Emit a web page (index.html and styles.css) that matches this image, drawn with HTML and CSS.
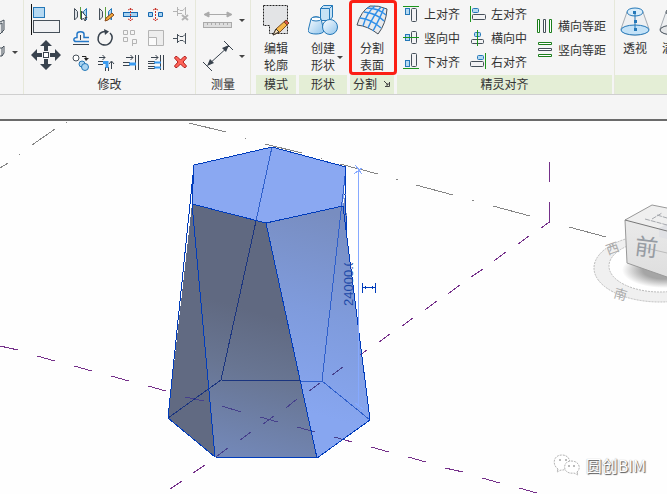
FILE: index.html
```html
<!DOCTYPE html>
<html lang="zh-CN">
<head>
<meta charset="utf-8">
<title>圆创BIM</title>
<link rel="stylesheet" href="styles.css">
</head>
<body>
<header class="ribbon">
  <section class="panel panel-prev">
    <div class="panel-body prev-body">
      <button class="tool" aria-label="几何图形"><svg width="6" height="16" viewBox="0 0 6 16"><path d="M0 3L4 1V11L0 15M0 5L2 4V14" fill="#e4e6e8" stroke="#46505a"/></svg></button>
      <button class="tool split" aria-label="连接"><svg width="6" height="14" viewBox="0 0 6 14"><path d="M0 3H2L4 1V8L2 11H0M2 3V11" fill="#f2f2f2" stroke="#46505a"/></svg><span class="caret"></span></button>
    </div>
  </section>

  <section class="panel">
    <div class="panel-body modify-body">
      <div class="big-tools">
        <button class="tool" aria-label="对齐"><svg width="32" height="34" viewBox="0 0 32 34"><path d="M1.500 2V33" stroke="#111" fill="none"/><rect x="3.500" y="5.500" width="11" height="10" fill="#b5d9f2" stroke="#2478b8"/><rect x="3.500" y="18.500" width="26" height="12" fill="#f0f1f3" stroke="#46505a"/></svg></button>
        <button class="tool" aria-label="移动"><svg width="32" height="34" viewBox="0 0 32 34"><g fill="#39434e"><path d="M16 2L22 8H18V13H14V8H10zM16 32L22 26H18V21H14V26H10zM1 17L7 11V15H12V19H7V23zM31 17L25 11V15H20V19H25V23z"/></g><rect x="13.500" y="14.500" width="5" height="5" fill="#fff" stroke="#39434e"/></svg></button>
      </div>
      <div class="tool-grid">
        <button class="tool" aria-label="镜像拾取轴"><svg width="25" height="24" viewBox="0 0 25 24"><path d="M6.500 6.500L9.500 9.500V15L6.500 18z" fill="#dfe3e8" stroke="#46505a"/><path d="M12.500 5V17" stroke="#5aa03c"/><path d="M18.500 6.500L15.500 9.500V15L18.500 18z" fill="#a9d3f0" stroke="#2478b8"/><path d="M13.500 9V18L15.500 16L17 19L18 18L17 15.500H19z" fill="#fff" stroke="#39434e"/></svg></button>
        <button class="tool" aria-label="镜像绘制轴"><svg width="25" height="24" viewBox="0 0 25 24"><path d="M6.500 6.500L9.500 9.500V15L6.500 18z" fill="#dfe3e8" stroke="#46505a"/><path d="M12.500 5V17" stroke="#5aa03c"/><path d="M18.500 6.500L15.500 9.500V15L18.500 18z" fill="#a9d3f0" stroke="#2478b8"/><path d="M12 19L13 16L19 11L21 13L15 18z" fill="#f2a93b" stroke="#8a4a1c"/></svg></button>
        <button class="tool" aria-label="拆分图元"><svg width="25" height="24" viewBox="0 0 25 24"><rect x="5.500" y="10.500" width="14" height="4" fill="#a9d3f0" stroke="#1668b0"/><path d="M12.500 6V19M10 8L12 7M15 8L13 7M10 17L12 18M15 17L13 18" stroke="#c8332b" stroke-dasharray="2 1"/></svg></button>
        <button class="tool" aria-label="用间隙拆分"><svg width="25" height="24" viewBox="0 0 25 24"><path d="M5.500 10.500H9.500V14.500H5.500zM15.500 10.500H19.500V14.500H15.500z" fill="#a9d3f0" stroke="#1668b0"/><path d="M12.500 6V19M10 8L12 7M15 8L13 7M10 17L12 18M15 17L13 18" stroke="#c8332b" stroke-dasharray="2 1"/></svg></button>
        <button class="tool" aria-label="解锁"><svg width="25" height="24" viewBox="0 0 25 24" fill="none" stroke="#b4b4b4"><path d="M5 9.500H9M9.500 5V14M9.500 7.500H11L12 8.500H15L16.500 6.500M9.500 11.500H14M17.500 5V13"/><path d="M14 13L20 18M20 13L14 18" stroke-width="2"/></svg></button>

        <button class="tool" aria-label="偏移"><svg width="25" height="24" viewBox="0 0 25 24" fill="none"><path d="M21 15.500H8C5 15.500 5 11.500 9 11.500V8C9 5 16 5 16 8V11.500H21" stroke="#2478c8" stroke-width="1.500"/><path d="M5 18.500H21M12.500 14V9" stroke="#39434e"/></svg></button>
        <button class="tool" aria-label="旋转"><svg width="25" height="24" viewBox="0 0 25 24"><path d="M12 5.500C4 6 3 16 9 18.500C17 21 22 12 17 7" fill="none" stroke="#39434e" stroke-width="1.500"/><path d="M11 3L16 5.500L12 9z" fill="#39434e"/></svg></button>
        <button class="tool" aria-label="阵列"><svg width="25" height="24" viewBox="0 0 25 24" fill="none" stroke="#b4b4b4"><path d="M5.500 4.500H9.500V8.500H5.500zM12.500 4.500H16.500V8.500H12.500zM5.500 11.500H9.500V15.500H5.500zM14.500 20V13.500H18.500V17.500H15"/></svg></button>
        <button class="tool" aria-label="缩放"><svg width="25" height="24" viewBox="0 0 25 24" fill="#ededed" stroke="#b4b4b4"><path d="M5.500 4.500H20.500V19.500H5.500z"/><path d="M5.500 11.500H13.500V19.500H5.500z" fill="#fafafa"/></svg></button>
        <button class="tool" aria-label="锁定"><svg width="25" height="24" viewBox="0 0 25 24" fill="none" stroke="#46505a"><path d="M5 12.500H9M9.500 8V17M17.500 7V18M9.500 9.500H11L12 10.500H15L17 8.500M9.500 15.500H11L12 14.500H15L17 16.500"/></svg></button>

        <button class="tool" aria-label="复制"><svg width="25" height="24" viewBox="0 0 25 24"><circle cx="8" cy="8" r="3" fill="#fff" stroke="#46505a"/><path d="M14 6.500H18V9" fill="none" stroke="#222"/><path d="M16 8H21L18 11z" fill="#222"/><circle cx="14" cy="14" r="3" fill="#a9d3f0" stroke="#2478b8"/><circle cx="17" cy="17" r="3.500" fill="#a9d3f0" stroke="#2478b8"/></svg></button>
        <button class="tool" aria-label="修剪延伸为角"><svg width="25" height="24" viewBox="0 0 25 24" fill="none"><path d="M6 7.500H12M9.500 5L12 7.500L9.500 10M18.500 19V12M16 14L18.500 11L21 14" stroke="#39434e"/><path d="M5 11.500H10M5 14.500H10M12.500 17V21M15.500 17V21" stroke="#39434e"/><path d="M10 12.500H14V18" stroke="#3a9bf0" stroke-width="3"/></svg></button>
        <button class="tool" aria-label="修剪延伸单个图元"><svg width="25" height="24" viewBox="0 0 25 24" fill="none"><path d="M8 7.500H15M12.500 5L15 7.500L12.500 10M17.500 5V20M20.500 5V20M5 12.500H12M5 15.500H12" stroke="#39434e"/><path d="M11 14H18" stroke="#3a9bf0" stroke-width="3"/></svg></button>
        <button class="tool" aria-label="修剪延伸多个图元"><svg width="25" height="24" viewBox="0 0 25 24" fill="none"><path d="M8 7.500H15M12.500 5L15 7.500L12.500 10M17.500 5V20M20.500 5V20M5 11.500H12M5 13.500H12M5 16.500H12M5 18.500H12" stroke="#39434e"/><path d="M11 12.500H18M11 17.500H18" stroke="#3a9bf0" stroke-width="2"/></svg></button>
        <button class="tool" aria-label="删除"><svg width="25" height="24" viewBox="0 0 25 24"><path d="M7.500 6.500H9L12.500 10L16 6.500H17.500L18.500 8L15 12L18.500 16L17.500 17.500H16L12.500 14L9 17.500H7.500L6.500 16L10 12L6.500 8z" fill="#ff6458" stroke="#b01f1f"/></svg></button>
      </div>
    </div>
    <h2 class="panel-title">修改</h2>
  </section>

  <section class="panel">
    <div class="panel-body measure-body">
      <button class="tool split" aria-label="测量间距"><svg width="30" height="36" viewBox="0 0 30 36"><path d="M3 12.500H27M6 10L1 12.500L6 15zM24 10L29 12.500L24 15z" fill="#aaa" stroke="#aaa"/><rect x=".5" y="20.500" width="28" height="5" fill="#ddd" stroke="#aaa"/><path d="M4.500 21V23M8.500 21V23M12.500 21V23M16.500 21V23M20.500 21V23M24.500 21V23" stroke="#aaa"/></svg><span class="caret"></span></button>
      <button class="tool split" aria-label="尺寸标注"><svg width="30" height="36" viewBox="0 0 30 36"><path d="M5 27L26 8M0 24L9 33M21 3L30 12" stroke="#39434e" fill="none"/><path d="M4 28L7 21L11 25zM26 7L23 14L19 10z" fill="#39434e"/></svg><span class="caret"></span></button>
    </div>
    <h2 class="panel-title">测量</h2>
  </section>

  <div class="context">
    <section class="panel panel-context">
      <div class="panel-body">
        <button class="large"><svg width="28" height="40" viewBox="0 0 28 40"><path d="M1.500 5.500H25.500V33.500H7.500V25.500H1.500z" fill="#e3e4e6" stroke="#222" stroke-dasharray="2 1"/><path d="M11 35L14 29L24 20L27 23L18 32z" fill="#f5b84a" stroke="#7a4a20"/><path d="M11 35L14 29L17 32z" fill="#f8e2c0" stroke="#333"/><path d="M22 22L24 20L27 23L25 25z" fill="#d8574a" stroke="#7a4a20"/></svg><span>编辑<br>轮廓</span></button>
      </div>
      <h2 class="panel-title">模式</h2>
    </section>
    <section class="panel panel-context">
      <div class="panel-body">
        <button class="large"><svg width="30" height="40" viewBox="0 0 30 40"><defs><linearGradient id="ball" x2="1" y2="1"><stop stop-color="#fff"/><stop offset="1" stop-color="#8fc4ec"/></linearGradient></defs><path d="M12.500 8.500L15.500 5.500H24.500V17L21.500 20.500H12.500z" fill="#c7e2f5" stroke="#2478b8"/><path d="M12.500 8.500H21.500V20M21.500 8.500L24.500 5.500" fill="none" stroke="#2478b8"/><path d="M3 19C4 16 12 16 13 19L16 31C15 35 1 35 0 31z" fill="url(#ball)" stroke="#2478b8"/><ellipse cx="8" cy="19" rx="5" ry="2" fill="#fff" stroke="#2478b8"/><circle cx="22" cy="27" r="7.500" fill="url(#ball)" stroke="#2478b8"/></svg><span>创建<br>形状</span><span class="caret caret-corner"></span></button>
      </div>
      <h2 class="panel-title">形状</h2>
    </section>
    <section class="panel panel-context panel-marked">
      <div class="panel-body">
        <button class="large"><svg width="32" height="40" viewBox="0 0 32 40"><path d="M1 25Q5 11 14 6Q22 5 31 9Q30 24 22 34Q12 26 1 25z" fill="#e8eaed" stroke="#46505a"/><path d="M4 18Q15 19 25 28M8 12Q20 13 28 21M11 8Q22 8 30 15M7 26Q11 12 19 6M12 28Q18 14 25 7M17 31Q24 18 28 8" fill="none" stroke="#2f8fe8" stroke-width="1.500"/></svg><span>分割<br>表面</span></button>
      </div>
      <div class="panel-title title-launch"><h2>分割</h2><button class="tool" aria-label="分割设置"><svg width="8" height="8" viewBox="0 0 8 8"><path d="M1 1L5 5M6.500 2V6.500H2M3 5H5V3" stroke="#444" fill="none"/></svg></button></div>
    </section>
    <section class="panel panel-context">
      <div class="panel-body align-body">
        <div class="align-col">
          <button class="row-tool"><svg width="16" height="20" viewBox="0 0 16 20"><path d="M0 2.500H16" stroke="#1c961c"/><rect x="2.500" y="4.500" width="4" height="6" fill="#b5d9f2" stroke="#2478b8"/><rect x="8.500" y="4.500" width="5" height="13" rx="1" fill="#f2f2f4" stroke="#46505a"/></svg>上对齐</button>
          <button class="row-tool"><svg width="16" height="20" viewBox="0 0 16 20"><rect x="2.500" y="6.500" width="4" height="6" fill="#b5d9f2" stroke="#2478b8"/><rect x="8.500" y="3.500" width="5" height="12" rx="1" fill="#f2f2f4" stroke="#46505a"/><path d="M0 9.500H16" stroke="#1c961c"/></svg>竖向中</button>
          <button class="row-tool"><svg width="16" height="20" viewBox="0 0 16 20"><path d="M0 17.500H16" stroke="#1c961c"/><rect x="2.500" y="9.500" width="4" height="6" fill="#b5d9f2" stroke="#2478b8"/><rect x="8.500" y="2.500" width="5" height="13" rx="1" fill="#f2f2f4" stroke="#46505a"/></svg>下对齐</button>
        </div>
        <div class="align-col">
          <button class="row-tool"><svg width="16" height="20" viewBox="0 0 16 20"><path d="M.5 2V18" stroke="#1c961c"/><rect x="2.500" y="4.500" width="6" height="4" rx="1" fill="#b5d9f2" stroke="#2478b8"/><rect x="2.500" y="10.500" width="13" height="5" rx="1" fill="#f2f2f4" stroke="#46505a"/></svg>左对齐</button>
          <button class="row-tool"><svg width="16" height="20" viewBox="0 0 16 20"><rect x="4.500" y="4.500" width="6" height="4" rx="1" fill="#b5d9f2" stroke="#2478b8"/><rect x="1.500" y="11.500" width="12" height="4" rx="1" fill="#f2f2f4" stroke="#46505a"/><path d="M7.500 2V18" stroke="#1c961c"/></svg>横向中</button>
          <button class="row-tool"><svg width="16" height="20" viewBox="0 0 16 20"><path d="M15.500 2V18" stroke="#1c961c"/><rect x="7.500" y="4.500" width="6" height="4" rx="1" fill="#b5d9f2" stroke="#2478b8"/><rect x=".5" y="10.500" width="13" height="5" rx="1" fill="#f2f2f4" stroke="#46505a"/></svg>右对齐</button>
        </div>
        <div class="align-col">
          <button class="row-tool"><svg width="16" height="20" viewBox="0 0 16 20" fill="#fff"><path d="M.5 3.500H2.500V16.500H.5zM12.500 3.500H14.500V16.500H12.500z" stroke="#1c7e1c"/><path d="M6.500 3.500H8.500V16.500H6.500z" stroke="#46505a"/></svg>横向等距</button>
          <button class="row-tool"><svg width="16" height="20" viewBox="0 0 16 20" fill="#fff"><path d="M1.500 2.500H14.500V4.500H1.500zM1.500 14.500H14.500V16.500H1.500z" stroke="#1c7e1c"/><path d="M1.500 8.500H14.500V10.500H1.500z" stroke="#46505a"/></svg>竖向等距</button>
        </div>
      </div>
      <h2 class="panel-title">精灵对齐</h2>
    </section>
    <section class="panel panel-context panel-rest">
      <div class="panel-body view-body">
        <button class="large"><svg width="30" height="40" viewBox="0 0 30 40"><path d="M7 12L1 29C3 37 27 37 29 29L23 12z" fill="#eef0f2" stroke="#a4abb2"/><ellipse cx="15" cy="30" rx="14" ry="5" fill="#c4e2f7" stroke="#2478b8"/><ellipse cx="15" cy="12" rx="8" ry="4" fill="#d9edfa" stroke="#2478b8"/><path d="M15 12V30" stroke="#2478b8"/><path d="M13 11H16V14H13zM14 20H17V23H14zM14 28H17V31H14z" fill="#2478b8"/></svg><span>透视</span></button>
        <button class="large"><svg width="30" height="40" viewBox="0 0 30 40"><path d="M7 12L1 29C3 37 27 37 29 29L23 12z" fill="#eef0f2" stroke="#a4abb2"/><ellipse cx="15" cy="30" rx="14" ry="5" fill="#e4e6e8" stroke="#46505a"/><ellipse cx="15" cy="12" rx="8" ry="4" fill="#eee" stroke="#46505a"/></svg><span>满屏</span></button>
      </div>
      <h2 class="panel-title"></h2>
    </section>
  </div>
</header>
<div class="options-bar"></div>

<main class="viewport">
  <svg class="scene" role="img" aria-label="三维视图">
    <defs>
      <linearGradient id="face-front" gradientUnits="userSpaceOnUse" x1="250" y1="310" x2="210" y2="450"><stop stop-color="#606981"/><stop offset=".4" stop-color="#687592"/><stop offset="1" stop-color="#7388b8"/></linearGradient>
      <linearGradient id="face-right" gradientUnits="userSpaceOnUse" x1="355" y1="220" x2="300" y2="410"><stop stop-color="#788dc0"/><stop offset=".5" stop-color="#7f9bdc"/><stop offset="1" stop-color="#87a6f0"/></linearGradient>
      <clipPath id="dim-clip"><rect x="340" y="263" width="18" height="46"/></clipPath>
    </defs>
    <g transform="translate(0 -121)">
      <path class="grid-line" d="M0 168L8 163M19 154H20M32 145L55 129M66 122H67M189 123L226 132M245 138H246M265 144L302 153M321 158H322M340 164L378 174M396 179L398 180M416 185L453 195M472 200H474M493 206L530 216M569 227L606 237"/>
      <path d="M194 165L192 204L168 418L215 457z" fill="#616a82"/>
      <path d="M192 204L266 223L317 458L215 457z" fill="url(#face-front)"/>
      <path d="M266 223L343 206L346 190L347 235L370 420L317 458z" fill="url(#face-right)"/>
      <path d="M194 165L272 147L346 167L343 206L266 223L192 204z" fill="#8aa8f2"/>
      <path class="plane-line" d="M549.500 162V182M549.500 202V222L541 228M529 236L518 244M506 252L494 261M483 269L471 277M460 285L448 294M437 301L425 310M413 318L402 326M390 334L379 342M367 350L360 355M205 465L193 473M182 481L170 489M0 346L18 350M37 356L55 361M74 366L92 371M111 376L129 381M148 386L166 391M345 440L352 442M371 447L389 452M408 457L426 462M445 468L463 472M482 478L500 483M519 488L537 493"/>
      <path class="plane-line inner" d="M343 367L332 375M320 383L309 391M297 399L286 408M274 416L263 424M251 432L240 440M228 448L216 457M185 397L204 401M222 406L241 412M260 417L278 422M297 427L315 432M334 437L345 440"/>
      <path class="edge-hidden" d="M256 221L221 380L168 418M221 380L300 381"/>
      <path class="edge-back" d="M272 147L256 221M346 167L322 381L370 420M322 381H300"/>
      <path class="edge" d="M194 165L272 147L346 167M343 206L266 223L192 204M194 165L168 418L215 457L317 458L370 420L343 206M194 165L192 204L215 457M266 223L317 458M346 167L345 195L347 235"/>
      <path class="dim-line" d="M358.500 168V407M355 165L362 174M354 174L362 168M355 403L363 409"/>
      <g clip-path="url(#dim-clip)"><text class="dim-text" transform="translate(353 306) rotate(-90)">24000.0</text></g>
      <path class="edge" d="M362.500 283V293M375.500 283V293M363 287.500H375M365 286V289M372 286V289"/>
    </g>
  </svg>

  <svg class="view-cube" width="75" height="105" viewBox="592 200 75 105" role="img" aria-label="视图立方">
    <defs>
      <radialGradient id="shade"><stop offset=".5" stop-color="#a5a5a5"/><stop offset="1" stop-color="#fff"/></radialGradient>
      <linearGradient id="cube-front" x2="0" y2="1"><stop stop-color="#ededed"/><stop offset="1" stop-color="#dedede"/></linearGradient>
    </defs>
    <ellipse cx="660" cy="268" rx="66" ry="34" fill="#f0f0f0" stroke="#bbb" stroke-dasharray="2 1"/>
    <ellipse cx="660" cy="266" rx="51" ry="26" fill="#fff" stroke="#bbb" stroke-dasharray="2 1"/>
    <ellipse cx="664" cy="270" rx="42" ry="18" fill="url(#shade)"/>
    <path d="M625 220L652 205L667 208V277L627 263z" fill="url(#cube-front)"/>
    <path d="M625 220L652 205L667 208V231z" fill="#efefef"/>
    <path d="M659 228L667 224V239L659 237z" fill="#e0e1e5"/>
    <path d="M625 220L652 205L667 208M625 220L627 263L667 277" fill="none" stroke="#999"/>
    <path d="M625 220L667 231" stroke="#777"/>
    <path d="M645 219L667 225M652 219L662 213M657 215L667 218" stroke="#a5a8ad" stroke-dasharray="5 1"/>
    <path d="M646 248L667 253" stroke="#bbb"/>
    <text class="cube-text" transform="translate(634 254) rotate(7)">前</text>
    <text class="ring-text" transform="translate(608 255) rotate(-20)">西</text>
    <text class="ring-text" transform="translate(613 297) rotate(16)">南</text>
  </svg>

  <div class="watermark">
    <svg width="28" height="24" viewBox="0 0 28 24" fill="#fff" stroke="#b4b4b4" stroke-dasharray="2 1"><path d="M5 16L4 19L8 17C19 18 20 2 9 2C0 2 -1 12 5 16z"/><path d="M24 19L25 22L21 20C9 22 9 8 18 8C27 8 28 16 24 19z"/><path d="M6 7H8M12 7H14M15 13H17M20 13H22" stroke="#777"/></svg>
    <span>圆创BIM</span>
  </div>
</main>
</body>
</html>
```

FILE: styles.css
```css
* {
  box-sizing: border-box;
}

body {
  margin: 0;
  min-height: 100vh;
  display: flex;
  flex-direction: column;
  overflow: hidden;
  background: #fefefe;
  color: #333;
  font: 12px/17px "Noto Sans CJK SC", sans-serif;
}

button {
  display: flex;
  align-items: center;
  margin: 0;
  padding: 0;
  border: 0;
  background: none;
  color: inherit;
  font: inherit;
}

svg {
  display: block;
  flex: none;
}

/* Ribbon */
.ribbon {
  display: flex;
  overflow: hidden;
  background: #f5f5f5;
  border-bottom: 1px solid #cfcfcf;
}

.panel {
  position: relative;
  flex: none;
  display: flex;
  flex-direction: column;
  border-right: 1px solid #e6e8da;
}

.panel-body {
  height: 75px;
  display: flex;
}

.panel-title {
  height: 19px;
  margin: 0;
  font-size: 12px;
  font-weight: 400;
  line-height: 18px;
  text-align: center;
}

.panel-title h2 {
  margin: 0;
  font: inherit;
}

.title-launch {
  display: flex;
  align-items: center;
  justify-content: space-between;
  padding: 0 3px 1px;
}

.panel-context {
  border-right: 0;
}

.panel-context .panel-title {
  background: #e4eed6;
}

.context {
  flex: 1;
  min-width: 0;
  display: flex;
  gap: 3px;
  padding-left: 5px;
}

.panel-rest {
  flex: 1;
  min-width: 0;
  box-shadow: -1px 0 #e6e8da;
}

.panel-marked::after {
  content: "";
  position: absolute;
  inset: 0 -3px 19px -1px;
  border: 3px solid #fb1f14;
  border-radius: 4px;
  pointer-events: none;
}

.split {
  gap: 6px;
}

.caret {
  border: 3px solid transparent;
  border-top-color: #444;
  border-bottom: 0;
}

.caret-corner {
  position: absolute;
  right: 4px;
  top: 56px;
}

.prev-body {
  flex-direction: column;
  gap: 10px;
  padding: 19px 5px 0 0;
}

.modify-body {
  gap: 6px;
  padding: 2px 2px 0 5px;
}

.big-tools {
  display: flex;
  flex-direction: column;
  gap: 2px;
  padding-left: 1px;
}

.tool-grid {
  display: grid;
  grid-template-columns: repeat(5, 25px);
  grid-auto-rows: 24px;
}

.measure-body {
  flex-direction: column;
  padding: 2px 5px 0 7px;
}

.large {
  flex-direction: column;
  padding: 0 6px;
  text-align: center;
}

.large svg {
  margin-bottom: -1px;
}

.large:has(.caret) {
  position: relative;
  padding: 0 9px;
}

.align-body {
  gap: 10px;
  padding: 2px 6px;
}

.align-col {
  display: flex;
  flex-direction: column;
  justify-content: center;
}

.row-tool {
  height: 24px;
  gap: 5px;
}

.view-body {
  gap: 9px;
  padding-left: 5px;
  overflow: hidden;
}

.view-body .large {
  flex: none;
  padding: 0;
}

.options-bar {
  height: 26px;
  background: #f5f5f5;
  border-bottom: 2px solid #6b6b6b;
}

/* Drawing area */
.viewport {
  position: relative;
  flex: 1;
  display: flex;
  overflow: hidden;
}

.scene {
  flex: 1;
  min-width: 0;
  fill: none;
}

.scene path {
  shape-rendering: crispEdges;
}

.grid-line {
  stroke: #858585;
}

.plane-line {
  stroke: #75308a;
}

.plane-line.inner {
  stroke: #46408c;
}

.edge {
  stroke: #003cbc;
}

.edge-back {
  stroke: #2f60cc;
}

.edge-hidden {
  stroke: #1b357f;
}

.dim-line {
  stroke: #86a9ff;
}

.dim-text {
  fill: #1d49a8;
  font: 13px "Liberation Sans", sans-serif;
}

.view-cube {
  position: absolute;
  top: 79px;
  right: 0;
}

.cube-text {
  fill: #979ca3;
  font-size: 23px;
}

.ring-text {
  fill: #aaa;
  font-size: 13px;
}

.watermark {
  position: absolute;
  right: 21px;
  bottom: 17px;
  display: flex;
  align-items: center;
  gap: 5px;
  color: #fff;
  font-size: 16px;
  line-height: 24px;
  text-shadow: 1px 1px 1px #555, 0 0 1px #999;
}
```
